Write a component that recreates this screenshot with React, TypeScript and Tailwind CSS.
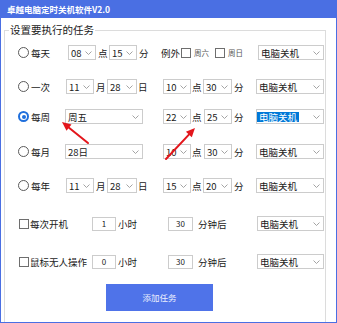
import React from "react";

const font = "font-['Noto_Sans_CJK_SC','Noto_Sans',sans-serif]";

function Chevron() {
  return (
    <svg width="7" height="4" viewBox="0 0 7 4" className="shrink-0">
      <polyline points="0.5,0.5 3.5,3.5 6.5,0.5" fill="none" stroke="#9a9a9a" strokeWidth="0.9" />
    </svg>
  );
}

function Sel({ value, className, hl }: { value: string; className: string; hl?: boolean }) {
  return (
    <div
      className={`flex h-[15px] shrink-0 items-center justify-between border border-[#cccccc] bg-white pr-[3px] ${className}`}
    >
      <span
        className={`whitespace-nowrap px-[2px] text-[9.5px] leading-[10px] ${
          hl ? "bg-[#0078d7] text-white" : "text-[#1a1a1a]"
        }`}
      >
        {value}
      </span>
      <Chevron />
    </div>
  );
}

function Radio({ checked }: { checked?: boolean }) {
  return checked ? (
    <span className="flex h-[11px] w-[11px] shrink-0 items-center justify-center rounded-full border-[2px] border-[#1f6fdc]">
      <span className="h-[4px] w-[4px] rounded-full bg-[#1f6fdc]" />
    </span>
  ) : (
    <span className="h-[11px] w-[11px] shrink-0 rounded-full border border-[#5a5a5a] bg-white" />
  );
}

function Check() {
  return <span className="h-[10px] w-[10px] shrink-0 border border-[#6e6e6e] bg-white" />;
}

function Num({ value, className }: { value: string; className: string }) {
  return (
    <div
      className={`flex h-[14px] shrink-0 items-center justify-center border border-[#cccccc] bg-white text-[8px] text-[#222] ${className}`}
    >
      {value}
    </div>
  );
}

function T({ children, className }: { children: React.ReactNode; className: string }) {
  return (
    <span className={`shrink-0 whitespace-nowrap text-[9.5px] leading-[12px] text-[#1a1a1a] ${className}`}>
      {children}
    </span>
  );
}

export default function App() {
  return (
    <div className={`relative h-[323px] w-[337px] bg-white ${font}`}>
      <div className="flex h-full w-full flex-col overflow-hidden border-x border-b border-[#4a6fe3] bg-white">
        {/* title bar */}
        <div className="flex h-[18px] shrink-0 items-center bg-[#4a6fe3] pl-[6px]">
          <span className="text-[8.5px] font-bold leading-none text-white">卓越电脑定时关机软件V2.0</span>
        </div>

        <fieldset className="ml-[3px] mt-[5px] h-[320px] w-[322px] shrink-0 border border-[#dcdcdc]">
          <legend className="ml-[4px] px-[1px] text-[10.5px] leading-[14px] text-[#1a1a1a]">设置要执行的任务</legend>

          {/* 每天 */}
          <div className="mt-[8px] flex h-[15px] items-center pl-[13px]">
            <Radio />
            <T className="ml-[2px] w-[37px]">每天</T>
            <Sel value="08" className="w-[28px]" />
            <T className="ml-[2px] w-[11px]">点</T>
            <Sel value="15" className="w-[28px]" />
            <T className="ml-[2px] w-[22px]">分</T>
            <T className="w-[20px]">例外</T>
            <Check />
            <span className="ml-[3px] w-[21px] shrink-0 whitespace-nowrap text-[7.5px] text-[#555]">周六</span>
            <Check />
            <span className="ml-[3px] w-[30px] shrink-0 whitespace-nowrap text-[7.5px] text-[#555]">周日</span>
            <Sel value="电脑关机" className="w-[66px]" />
          </div>

          {/* 一次 */}
          <div className="mt-[19px] flex h-[15px] items-center pl-[13px]">
            <Radio />
            <T className="ml-[2px] w-[35px]">一次</T>
            <Sel value="11" className="w-[28px]" />
            <T className="ml-[2px] w-[11px]">月</T>
            <Sel value="28" className="w-[30px]" />
            <T className="ml-[1px] w-[25px]">日</T>
            <Sel value="10" className="w-[28px]" />
            <T className="ml-[1px] w-[11px]">点</T>
            <Sel value="30" className="w-[29px]" />
            <T className="ml-[2px] w-[22px]">分</T>
            <Sel value="电脑关机" className="w-[68px]" />
          </div>

          {/* 每周 */}
          <div className="mt-[15px] flex h-[15px] items-center pl-[13px]">
            <Radio checked />
            <T className="ml-[2px] w-[34px]">每周</T>
            <Sel value="周五" className="w-[78px]" />
            <Sel value="22" className="ml-[20px] w-[28px]" />
            <T className="ml-[1px] w-[12px]">点</T>
            <Sel value="25" className="w-[28px]" />
            <T className="ml-[2px] w-[22px]">分</T>
            <Sel value="电脑关机" className="w-[68px]" hl />
          </div>

          {/* 每月 */}
          <div className="mt-[20px] flex h-[15px] items-center pl-[13px]">
            <Radio />
            <T className="ml-[2px] w-[34px]">每月</T>
            <Sel value="28日" className="w-[78px]" />
            <Sel value="10" className="ml-[20px] w-[28px]" />
            <T className="ml-[1px] w-[12px]">点</T>
            <Sel value="30" className="w-[28px]" />
            <T className="ml-[2px] w-[22px]">分</T>
            <Sel value="电脑关机" className="w-[68px]" />
          </div>

          {/* 每年 */}
          <div className="mt-[19px] flex h-[15px] items-center pl-[13px]">
            <Radio />
            <T className="ml-[2px] w-[35px]">每年</T>
            <Sel value="11" className="w-[28px]" />
            <T className="ml-[2px] w-[11px]">月</T>
            <Sel value="28" className="w-[30px]" />
            <T className="ml-[1px] w-[25px]">日</T>
            <Sel value="15" className="w-[28px]" />
            <T className="ml-[1px] w-[11px]">点</T>
            <Sel value="20" className="w-[29px]" />
            <T className="ml-[2px] w-[22px]">分</T>
            <Sel value="电脑关机" className="w-[68px]" />
          </div>

          {/* 每次开机 */}
          <div className="mt-[23px] flex h-[15px] items-center pl-[14px]">
            <Check />
            <T className="ml-[1px] w-[62px]">每次开机</T>
            <Num value="1" className="w-[24px]" />
            <T className="ml-[2px] w-[50px]">小时</T>
            <Num value="30" className="w-[25px]" />
            <T className="ml-[5px] w-[59px]">分钟后</T>
            <Sel value="电脑关机" className="h-[14px] w-[67px]" />
          </div>

          {/* 鼠标无人操作 */}
          <div className="mt-[23px] flex h-[15px] items-center pl-[14px]">
            <Check />
            <T className="ml-[1px] w-[62px]">鼠标无人操作</T>
            <Num value="0" className="w-[24px]" />
            <T className="ml-[2px] w-[50px]">小时</T>
            <Num value="30" className="w-[25px]" />
            <T className="ml-[5px] w-[59px]">分钟后</T>
            <Sel value="电脑关机" className="h-[14px] w-[67px]" />
          </div>

          <button className="ml-[101px] mt-[15px] flex h-[27px] w-[107px] items-center justify-center bg-[#4f73e9] text-[8.5px] text-white/90">
            添加任务
          </button>
        </fieldset>
      </div>

      {/* red annotation arrows */}
      <svg className="pointer-events-none absolute left-0 top-0" width="337" height="323" viewBox="0 0 337 323">
        <line x1="88" y1="143" x2="69" y2="127.7" stroke="#e3161c" strokeWidth="2" strokeLinecap="round" />
        <polygon points="62,122 71.5,124.6 66.5,130.8" fill="#e3161c" />
        <line x1="166" y1="159" x2="188.9" y2="134.6" stroke="#e3161c" strokeWidth="2" strokeLinecap="round" />
        <polygon points="195,128 191.8,137.3 185.9,131.8" fill="#e3161c" />
      </svg>
    </div>
  );
}
